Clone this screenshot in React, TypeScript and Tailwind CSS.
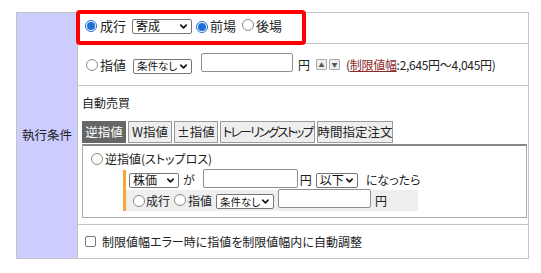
import React from 'react';
import { ChevronDown } from 'lucide-react';

const FONT = "font-['Noto_Sans_CJK_JP','Noto_Sans',sans-serif] [font-feature-settings:'palt']";

/* ラジオボタン */
const Radio: React.FC<{ checked?: boolean }> = ({ checked }) =>
  checked ? (
    <span className="inline-flex h-[12px] w-[12px] shrink-0 items-center justify-center rounded-full border border-[#1f6fd6] bg-white">
      <span className="h-[8px] w-[8px] rounded-full bg-[#1f6fd6]" />
    </span>
  ) : (
    <span className="inline-block h-[12px] w-[12px] shrink-0 rounded-full border border-[#8a8a8a] bg-white" />
  );

/* セレクトボックス */
const Select: React.FC<{ label: string; w: string; small?: boolean }> = ({ label, w, small }) => (
  <span
    className={`inline-flex h-[15px] ${w} shrink-0 items-center justify-between whitespace-nowrap rounded-[2px] border border-[#767676] bg-white pl-[3px] pr-[2px] leading-none text-[#111] ${
      small ? 'text-[10.5px]' : 'text-[12px]'
    }`}
  >
    <span>{label}</span>
    <ChevronDown className="h-[11px] w-[11px]" strokeWidth={3.5} />
  </span>
);

const Input: React.FC<{ w: string }> = ({ w }) => (
  <span className={`inline-block h-[19px] ${w} shrink-0 rounded-[2px] border border-[#8f8f8f] bg-white`} />
);

const Tab: React.FC<{ label: string; active?: boolean; cls?: string }> = ({ label, active, cls = '' }) => (
  <span
    className={`flex h-[22px] items-center justify-center whitespace-nowrap border px-[1px] text-[12.5px] leading-none ${
      active ? 'border-[#666] bg-[#666] text-white' : 'border-[#9a9a9a] bg-[#eeeeee] text-[#222]'
    } ${cls}`}
  >
    {label}
  </span>
);

const Spin: React.FC<{ up?: boolean }> = ({ up }) => (
  <span className="flex h-[11px] w-[11px] items-center justify-center rounded-[1px] border border-[#aaa] bg-[#eee] text-[6px] leading-none text-[#555]">
    {up ? '▲' : '▼'}
  </span>
);

export default function App() {
  return (
    <div className={`h-[273px] w-[541px] whitespace-nowrap bg-white pl-4 pt-3 text-[#222] ${FONT}`}>
      <div className="relative flex h-[247px] w-[513px] border border-[#c4c4c4]">
        {/* 見出し */}
        <div className="flex w-[61px] shrink-0 items-center justify-center border-r border-[#c4c4c4] bg-[#ccccff] text-[12.5px]">
          執行条件
        </div>

        <div className="flex flex-1 flex-col">
          {/* 成行 */}
          <div className="flex h-[31px] items-center gap-[2px] border-b border-[#c4c4c4] pb-[4px] pl-[7px] text-[13px]">
            <Radio checked />
            <span className="ml-[1px]">成行</span>
            <span className="ml-[4px]"><Select label="寄成" w="w-[60px]" /></span>
            <span className="ml-[2px]"><Radio checked /></span>
            <span>前場</span>
            <span className="ml-[4px]"><Radio /></span>
            <span>後場</span>
          </div>

          {/* 指値 */}
          <div className="flex h-[42px] items-center border-b border-[#c4c4c4] pl-[8px] text-[13px]">
            <Radio />
            <span className="ml-[2px]">指値</span>
            <span className="ml-[7px]"><Select label="条件なし" w="w-[59px]" small /></span>
            <span className="ml-[9px]"><Input w="w-[92px]" /></span>
            <span className="ml-[5px] text-[12px]">円</span>
            <span className="ml-[6px]"><Spin up /></span>
            <span className="ml-[2px]"><Spin /></span>
            <span className="ml-[6px] text-[12px] tracking-[-0.3px]">
              (<span className="text-[#8b2b2b] underline">制限値幅</span>:2,645円～4,045円)
            </span>
          </div>

          {/* 自動売買 */}
          <div className="flex h-[139px] flex-col border-b border-[#c4c4c4] pl-[4px] pr-[1px] pt-[9px] text-[12px]">
            <div className="h-[26px] leading-[16px]">自動売買</div>
            <div className="flex gap-[2px]">
              <Tab label="逆指値" active cls="w-[44px]" />
              <Tab label="W指値" cls="w-[44px]" />
              <Tab label="±指値" cls="w-[44px]" />
              <Tab label="トレーリングストップ" cls="w-[95px] tracking-[-1.8px]" />
              <Tab label="時間指定注文" cls="w-[76px]" />
            </div>
            <div className="mt-[1px] h-[74px] border border-t-2 border-[#aaa] border-t-[#888]">
              <div className="flex h-[24px] items-center pl-[8px] pt-[2px]">
                <Radio />
                <span className="ml-[2px]">逆指値(ストップロス)</span>
              </div>
              <div className="ml-[40px] w-fit border-l-[3px] border-[#f7a43a]">
                <div className="flex h-[20px] items-center pl-[3px]">
                  <Select label="株価" w="w-[50px]" />
                  <span className="ml-[4px]">が</span>
                  <span className="ml-[8px]"><Input w="w-[95px]" /></span>
                  <span className="ml-[2px]">円</span>
                  <span className="ml-[4px]"><Select label="以下" w="w-[42px]" /></span>
                  <span className="ml-[8px]">になったら</span>
                </div>
                <div className="flex h-[21px] w-[292px] items-center bg-[#eeeeee] pl-[7px]">
                  <Radio />
                  <span className="ml-[1px]">成行</span>
                  <span className="ml-[4px]"><Radio /></span>
                  <span className="ml-[2px]">指値</span>
                  <span className="ml-[4px]"><Select label="条件なし" w="w-[58px]" small /></span>
                  <span className="ml-[4px]"><Input w="w-[93px]" /></span>
                  <span className="ml-[4px]">円</span>
                </div>
              </div>
            </div>
          </div>

          {/* エラー時の自動調整 */}
          <div className="flex flex-1 items-center pl-[7px] text-[12px]">
            <span className="inline-block h-[11px] w-[11px] rounded-[2px] border border-[#777] bg-white" />
            <span className="ml-[6px]">制限値幅エラー時に指値を制限値幅内に自動調整</span>
          </div>
        </div>

        {/* 強調枠 */}
        <div className="pointer-events-none absolute left-[59px] top-[-3px] h-[35px] w-[230px] rounded-[4px] border-[4px] border-[#ff0000]" />
      </div>
    </div>
  );
}
